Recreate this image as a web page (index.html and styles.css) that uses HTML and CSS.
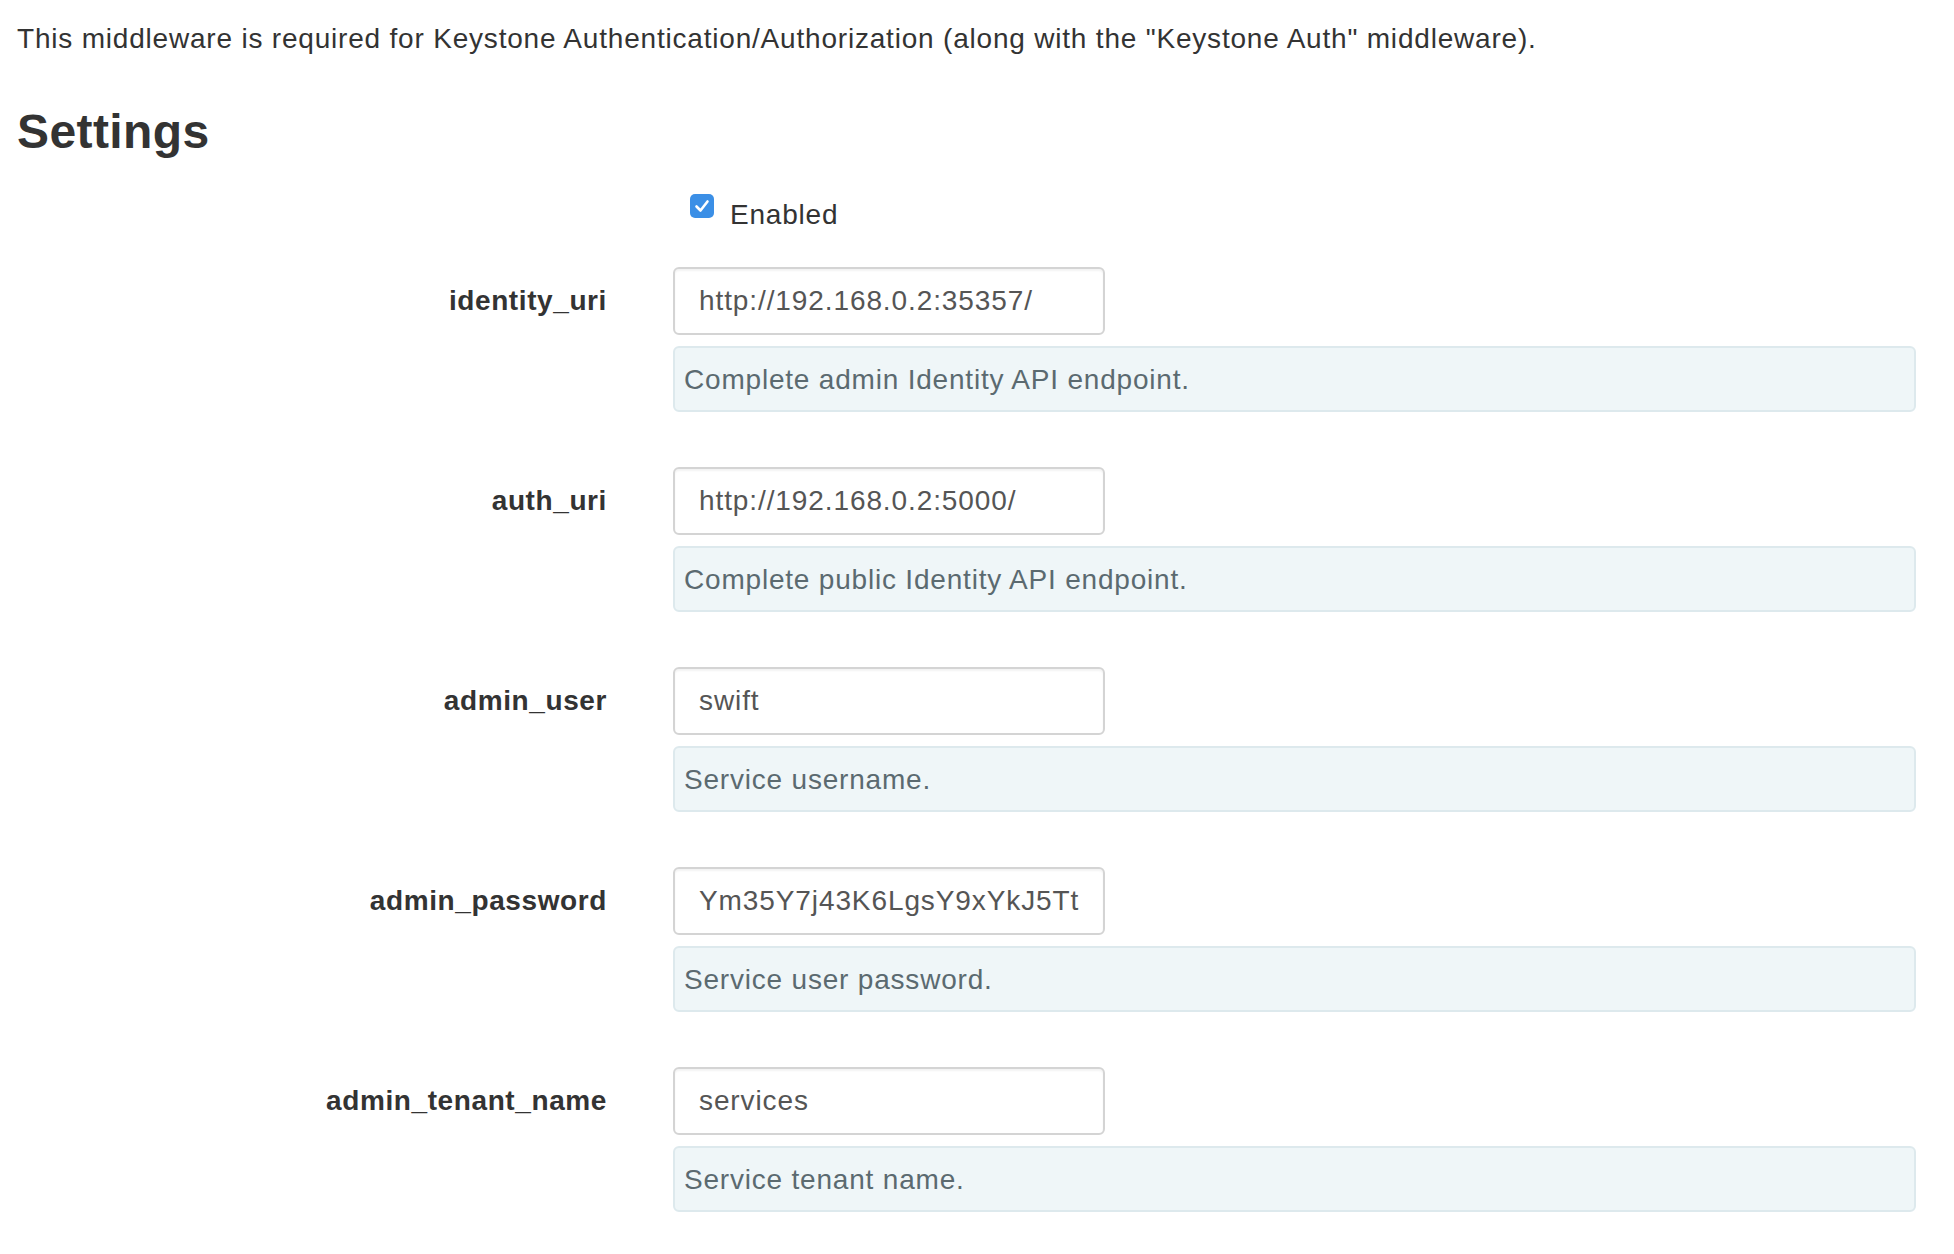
FILE: index.html
```html
<!DOCTYPE html>
<html lang="en">
<head>
<meta charset="utf-8">
<title>Keystone Auth Token settings</title>
<link rel="stylesheet" href="styles.css">
</head>
<body>
<div class="page">
  <p class="intro">This middleware is required for Keystone Authentication/Authorization (along with the "Keystone Auth" middleware).</p>
  <h3 class="section-title">Settings</h3>
  <form class="form">
    <div class="row check-row">
      <div class="label-col"></div>
      <label class="check">
        <span class="check-box"><svg viewBox="0 0 24 24" width="24" height="24"><rect x="0" y="0" width="24" height="24" rx="5" fill="#3b8fe6"/><path d="M6.5 12.5 L10.5 16.5 L17.5 7.5" fill="none" stroke="#fff" stroke-width="2.6" stroke-linecap="round" stroke-linejoin="round"/></svg></span>
        <span class="check-text">Enabled</span>
      </label>
    </div>
    <div class="row group">
      <label class="label-col field-label">identity_uri</label>
      <div class="field">
        <input class="control" type="text" value="http://192.168.0.2:35357/">
        <div class="help">Complete admin Identity API endpoint.</div>
      </div>
    </div>
    <div class="row group">
      <label class="label-col field-label">auth_uri</label>
      <div class="field">
        <input class="control" type="text" value="http://192.168.0.2:5000/">
        <div class="help">Complete public Identity API endpoint.</div>
      </div>
    </div>
    <div class="row group">
      <label class="label-col field-label">admin_user</label>
      <div class="field">
        <input class="control" type="text" value="swift">
        <div class="help">Service username.</div>
      </div>
    </div>
    <div class="row group">
      <label class="label-col field-label">admin_password</label>
      <div class="field">
        <input class="control" type="text" value="Ym35Y7j43K6LgsY9xYkJ5TtQwR2">
        <div class="help">Service user password.</div>
      </div>
    </div>
    <div class="row group">
      <label class="label-col field-label">admin_tenant_name</label>
      <div class="field">
        <input class="control" type="text" value="services">
        <div class="help">Service tenant name.</div>
      </div>
    </div>
  </form>
</div>
</body>
</html>
```
FILE: styles.css
```css
* { box-sizing: border-box; }
html, body { margin: 0; padding: 0; background: #fff; }
body {
  font-family: "Liberation Sans", Arial, Helvetica, sans-serif;
  font-size: 28px;
  line-height: 40px;
  letter-spacing: 0.8px;
  color: #333;
  overflow: hidden;
}
.page {
  padding-left: 17px;
  width: 1916px;
}
.intro {
  margin: 19px 0 0 0;
}
.section-title {
  margin: 47px 0 0 0;
  font-size: 48px;
  font-weight: bold;
  letter-spacing: 0.4px;
  line-height: 52.8px;
  color: #333;
}
.form { margin-top: 36px; }
.row {
  display: grid;
  grid-template-columns: 590px 1fr;
  column-gap: 66px;
}
.check-row { margin-bottom: 32px; }
.check {
  display: flex;
  align-items: flex-start;
  padding-left: 17px;
}
.check-box {
  display: block;
  width: 24px;
  height: 24px;
  margin-top: -1px;
  margin-right: 16px;
}
.check-box svg { display: block; }
.check-text { display: block; }
.group { margin-bottom: 55px; }
.field-label {
  text-align: right;
  font-weight: bold;
  letter-spacing: 0.6px;
  padding-top: 14px;
  color: #333;
}
.field { display: flex; flex-direction: column; }
.control {
  display: block;
  width: 432px;
  height: 68px;
  padding: 12px 24px;
  font-family: "Liberation Sans", Arial, Helvetica, sans-serif;
  font-size: 28px;
  line-height: 40px;
  letter-spacing: 0.9px;
  color: #555;
  background: #fff;
  border: 2px solid #d4d4d4;
  border-radius: 6px;
  box-shadow: inset 0 2px 2px rgba(0,0,0,0.05);
  outline: none;
  margin: 0;
}
.help {
  margin-top: 11px;
  height: 66px;
  padding: 12px 9px;
  background: #eff6f8;
  border: 2px solid #dde9ed;
  border-radius: 6px;
  color: #5b6a70;
}
```
